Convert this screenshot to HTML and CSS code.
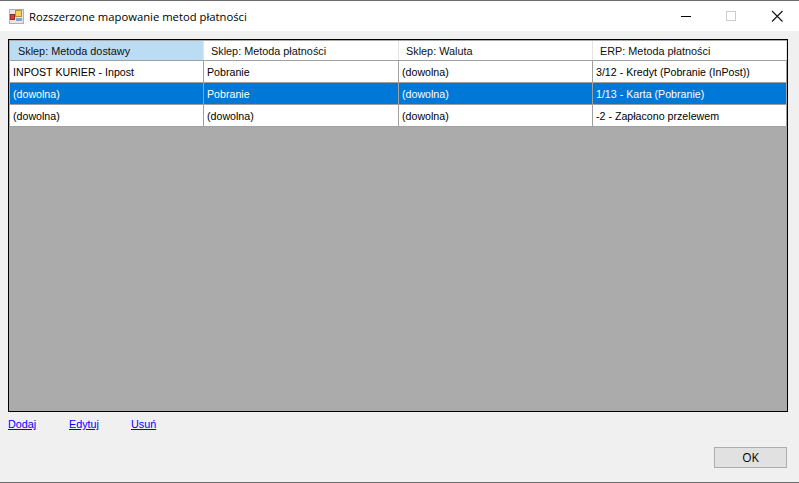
FILE: index.html
```html
<!DOCTYPE html>
<html lang="pl">
<head>
<meta charset="utf-8">
<title>Rozszerzone mapowanie metod płatności</title>
<link rel="stylesheet" href="styles.css">
</head>
<body>
<div class="window">
  <header class="titlebar">
    <svg class="appicon" width="15" height="15" viewBox="0 0 15 15">
      <rect x="0.5" y="0.5" width="14" height="14" fill="#e6e6e6" stroke="#b0b0b0"/>
      <rect x="6.500" y="1.500" width="6" height="6" fill="#f7cf55" stroke="#b8902c"/>
      <rect x="1.500" y="5.500" width="4" height="5" fill="#dc3c30" stroke="#962a20"/>
      <rect x="7" y="9" width="6" height="3" fill="#7fa4dc"/>
    </svg>
    <span class="title">Rozszerzone mapowanie metod płatności</span>
    <div class="controls">
      <svg class="ctl" width="46" height="30" viewBox="0 0 46 30"><path d="M20 15.500h10" stroke="#000"/></svg>
      <svg class="ctl" width="46" height="30" viewBox="0 0 46 30"><rect x="19.500" y="10.500" width="9" height="9" fill="none" stroke="#ccc"/></svg>
      <svg class="ctl" width="46" height="30" viewBox="0 0 46 30"><path d="M19 10l10.500 10.500M29.500 10L19 20.500" stroke="#111" stroke-width="1.100"/></svg>
    </div>
  </header>
  <main class="content">
    <section class="grid">
      <div class="table">
        <div class="row head">
          <div class="cell current">Sklep: Metoda dostawy</div>
          <div class="cell">Sklep: Metoda płatności</div>
          <div class="cell">Sklep: Waluta</div>
          <div class="cell">ERP: Metoda płatności</div>
        </div>
        <div class="row">
          <div class="cell">INPOST KURIER - Inpost</div>
          <div class="cell">Pobranie</div>
          <div class="cell">(dowolna)</div>
          <div class="cell">3/12 - Kredyt (Pobranie (InPost))</div>
        </div>
        <div class="row selected">
          <div class="cell">(dowolna)</div>
          <div class="cell">Pobranie</div>
          <div class="cell">(dowolna)</div>
          <div class="cell">1/13 - Karta (Pobranie)</div>
        </div>
        <div class="row">
          <div class="cell">(dowolna)</div>
          <div class="cell">(dowolna)</div>
          <div class="cell">(dowolna)</div>
          <div class="cell">-2 - Zapłacono przelewem</div>
        </div>
      </div>
    </section>
    <nav class="links">
      <a href="#">Dodaj</a>
      <a href="#">Edytuj</a>
      <a href="#">Usuń</a>
    </nav>
    <div class="footer"><button class="ok" type="button">OK</button></div>
  </main>
</div>
</body>
</html>
```
FILE: styles.css
```css
* { box-sizing: border-box; }
html, body { margin: 0; padding: 0; }
body { width: 799px; height: 483px; overflow: hidden; background: #f0f0f0; font-family: "Liberation Sans", Arial, sans-serif; font-size: 10.65px; color: #000; }
.window { height: 483px; display: flex; flex-direction: column; border-top: 1px solid #6e6e6e; border-bottom: 1px solid #6e6e6e; }
.titlebar { height: 30px; flex: none; background: #fff; display: flex; align-items: center; padding-left: 9px; }
.appicon { flex: none; }
.title { margin-left: 5px; font-size: 11.28px; font-family: "Open Sans", sans-serif; color: #000; }
.controls { margin-left: auto; display: flex; }
.ctl { display: block; }
.content { flex: 1; display: flex; flex-direction: column; padding: 8px 11px 0 8px; }
.grid { height: 373px; flex: none; background: #ababab; border: 1px solid #000; padding: 1px 1px 0 1px; }
.table { display: flex; flex-direction: column; }
.row { display: grid; grid-template-columns: 194px 195px 194px 194px; height: 22px; background: #fff; border-bottom: 1px solid #a0a0a0; }
.cell { padding: 0 0 0 3px; border-right: 1px solid #a0a0a0; line-height: 22px; white-space: nowrap; overflow: hidden; }
.head { height: 20px; border-bottom: 1px solid #a0a0a0; }
.head .cell { padding-left: 7px; font-size: 10.85px; line-height: 21px; border-right: 1px solid #e4e4e4; color: #111; }
.head .current { padding-left: 8px; background: #bcdcf4; }
.selected { background: #0078d7; color: #fff; }
.links { display: flex; height: 24px; padding-top: 6px; font-size: 10.8px; }
.links a { color: #0000ff; text-decoration: underline; }
.links a:nth-child(1) { width: 61px; }
.links a:nth-child(2) { width: 62px; }
.footer { display: flex; justify-content: flex-end; padding: 11px 1px 0 0; }
.ok { width: 73px; height: 21px; padding: 0; background: #e1e1e1; border: 1px solid #adadad; font: 12px "Open Sans", sans-serif; color: #000; }
```
